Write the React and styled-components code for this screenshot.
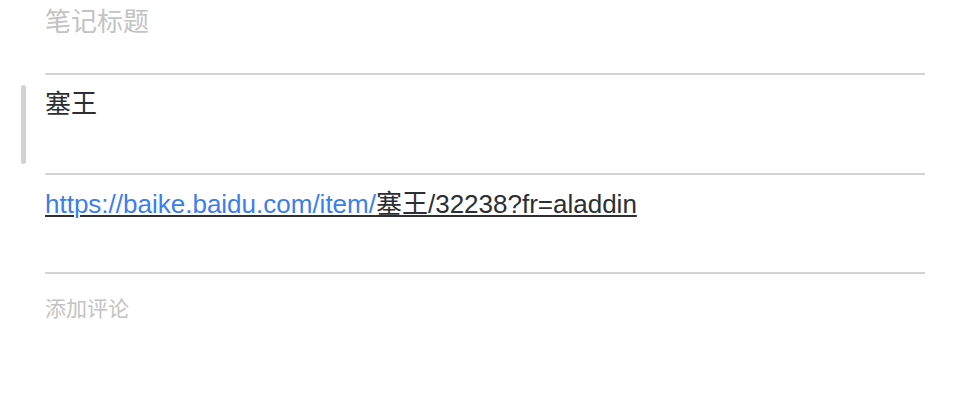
import React from "react";
import styled, { createGlobalStyle } from "styled-components";

const GlobalStyle = createGlobalStyle`
  body {
    margin: 0;
    background: #ffffff;
    font-family: "Liberation Sans", "Noto Sans CJK SC", sans-serif;
  }
`;

const Editor = styled.div`
  width: 880px;
  padding: 0 35px 0 45px;
`;

const Field = styled.div`
  position: relative;
  height: ${(p) => p.height}px;
  padding-top: ${(p) => p.top}px;
  box-sizing: border-box;
  border-bottom: ${(p) => (p.last ? "none" : "2px solid #d3d3d3")};
  font-size: ${(p) => p.size || 26}px;
  line-height: 32px;
  color: ${(p) => p.color || "#2b2e33"};
`;

const Handle = styled.div`
  position: absolute;
  left: -24px;
  top: 10px;
  width: 5px;
  height: 79px;
  border-radius: 3px;
  background: #d2d2d2;
`;

const LinkText = styled.span`
  color: #2b2e33;
  text-decoration: underline;
  text-decoration-color: #2b2e33;
  text-decoration-thickness: 2px;
  text-underline-offset: 2px;
`;

const Blue = styled.span`
  color: #3a7ef0;
`;

const App = () => {
  return (
    <>
      <GlobalStyle />
      <Editor>
        <Field height={75} top={6} color="#c3c3c3">
          笔记标题
        </Field>
        <Field height={100} top={13}>
          <Handle />
          塞王
        </Field>
        <Field height={99} top={13}>
          <LinkText>
            <Blue>https://baike.baidu.com/item/</Blue>塞王/32238?fr=aladdin
          </LinkText>
        </Field>
        <Field height={100} top={19} size={21} color="#c3c3c3" last>
          添加评论
        </Field>
      </Editor>
    </>
  );
};

export default App;
